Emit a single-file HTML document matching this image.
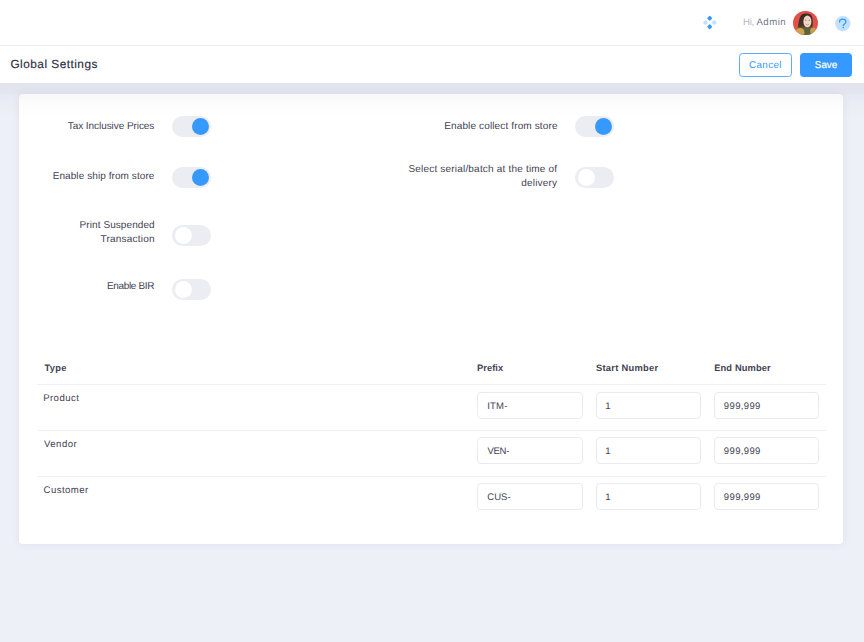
<!DOCTYPE html>
<html><head><meta charset="utf-8">
<style>
*{margin:0;padding:0;box-sizing:border-box}
html,body{width:864px;height:642px;overflow:hidden;background:#eef0f8;font-family:"Liberation Sans",sans-serif}
.abs{position:absolute}
#hdr{position:absolute;left:0;top:0;width:864px;height:46px;background:#fff;border-bottom:1px solid #ecedf3}
#sub{position:absolute;left:0;top:46px;width:864px;height:37px;background:#fff}
#shade{position:absolute;left:0;top:83px;width:864px;height:34px;z-index:5;background:linear-gradient(rgba(67,70,110,.075) 0px,rgba(67,70,110,.07) 6px,rgba(67,70,110,.06) 10.5px,rgba(67,70,110,.045) 11px,rgba(67,70,110,.025) 17px,rgba(67,70,110,.01) 25px,rgba(67,70,110,0) 34px)}
#card{position:absolute;left:19px;top:94px;width:824px;height:450px;background:#fff;border-radius:4px;box-shadow:0 0 8px rgba(67,70,110,.09)}
.tg{position:absolute;width:39.5px;height:21px;border-radius:11px;background:#ebedf3}
.tg .k{position:absolute;width:17px;height:17px;border-radius:50%;top:2px}
.tg.on .k{left:20.8px;background:#3699ff;box-shadow:0 0 0 0.6px rgba(255,240,225,.5)}
.tg.off .k{left:3px;background:#fff}
.hline{position:absolute;left:37px;width:789px;height:1px;background:#f0f1f6}
.inp{position:absolute;height:27px;border:1px solid #eaebf2;border-radius:4px;background:#fff}
svg{position:absolute;left:0;top:0}
text{font-family:"Liberation Sans",sans-serif;text-rendering:geometricPrecision}
</style></head><body>
<div id="hdr"></div>
<div id="sub"></div>
<div id="shade"></div>

<svg width="864" height="46" viewBox="0 0 864 46">
  <rect x="707.7" y="16.3" width="4" height="4" rx="1.1" fill="#3699ff" transform="rotate(45 709.7 18.3)"/>
  <rect x="707.7" y="24.7" width="4" height="4" rx="1.1" fill="#3699ff" transform="rotate(45 709.7 26.7)"/>
  <rect x="703.5" y="20.5" width="4" height="4" rx="1.1" fill="#c3e0ff" transform="rotate(45 705.5 22.5)"/>
  <rect x="712.2" y="20.5" width="4" height="4" rx="1.1" fill="#c3e0ff" transform="rotate(45 714.2 22.5)"/>
  <circle cx="842.8" cy="23.6" r="7.7" fill="#c3e0ff"/>
  <path d="M839.5 22 C839.5 20.2 840.8 19.1 842.7 19.1 C844.6 19.1 845.9 20.3 845.9 21.9 C845.9 23.8 843.4 24 843.2 25.7" fill="none" stroke="#3699ff" stroke-width="1.3" stroke-linecap="round"/>
  <circle cx="843.2" cy="27.6" r="0.8" fill="#3699ff"/>
</svg>
<div class="abs" style="left:793px;top:10.5px;width:24.8px;height:24.6px;border-radius:50%;overflow:hidden">
  <svg width="25" height="25" viewBox="0 0 25 25">
    <defs><linearGradient id="hg" x1="0" y1="0" x2="0" y2="1"><stop offset="0" stop-color="#3a2a22"/><stop offset="0.55" stop-color="#4a3526"/><stop offset="0.8" stop-color="#b58a48"/><stop offset="1" stop-color="#d3a855"/></linearGradient></defs>
    <rect width="25" height="25" fill="#e2504a"/>
    <path d="M4 24 C5 16 5.5 6 9 3.6 C11 2.2 15 2 17.5 3.5 C20 5 20 10 19.6 17 L21 22 L12 25 Z" fill="url(#hg)"/>
    <ellipse cx="14.4" cy="10.6" rx="4" ry="6" fill="#f0d6c8"/>
    <path d="M12.2 9.2 h1.2 M15.6 9.2 h1.2" stroke="#6b4a3a" stroke-width="0.8"/>
    <path d="M12.8 13.2 Q14.4 14.6 16 13.2" stroke="#c98a7a" stroke-width="0.8" fill="none"/>
    <path d="M9 25 L9.8 17.5 C11 16 17 16 18.5 17.5 L19.2 25 Z" fill="#5b6240"/>
    <ellipse cx="7" cy="21.5" rx="4.5" ry="4.5" fill="#cfa24f"/>
    <ellipse cx="20.2" cy="20.2" rx="3" ry="3.6" fill="#c99c4c"/>
  </svg>
</div>

<div class="abs" style="left:739px;top:53px;width:52.5px;height:24px;border:1px solid #5eaaff;border-radius:3.5px;background:#fff"></div>
<div class="abs" style="left:800px;top:53px;width:52px;height:24px;border-radius:4px;background:#3699ff"></div>

<div id="card"></div>

<div class="tg on" style="left:171.5px;top:116px"><div class="k"></div></div>
<div class="tg on" style="left:171.5px;top:166.5px"><div class="k"></div></div>
<div class="tg off" style="left:171.5px;top:225px"><div class="k"></div></div>
<div class="tg off" style="left:171.5px;top:279px"><div class="k"></div></div>
<div class="tg on" style="left:574.5px;top:116px"><div class="k"></div></div>
<div class="tg off" style="left:574.5px;top:166.5px"><div class="k"></div></div>

<div class="hline" style="top:384px"></div>
<div class="hline" style="top:430px"></div>
<div class="hline" style="top:476px"></div>

<div class="inp" style="left:477px;top:392px;width:106px"></div>
<div class="inp" style="left:596px;top:392px;width:105px"></div>
<div class="inp" style="left:714px;top:392px;width:105px"></div>
<div class="inp" style="left:477px;top:437.3px;width:106px"></div>
<div class="inp" style="left:596px;top:437.3px;width:105px"></div>
<div class="inp" style="left:714px;top:437.3px;width:105px"></div>
<div class="inp" style="left:477px;top:483px;width:106px"></div>
<div class="inp" style="left:596px;top:483px;width:105px"></div>
<div class="inp" style="left:714px;top:483px;width:105px"></div>

<svg width="864" height="642" viewBox="0 0 864 642">
<text x="10.41" y="67.60" font-size="11.8" font-weight="normal" fill="#2b2d42" letter-spacing="0.498" stroke="#2b2d42" stroke-width="0.15">Global Settings</text>
<text x="749.11" y="67.70" font-size="9.9" font-weight="normal" fill="#3699ff" letter-spacing="0.319">Cancel</text>
<text x="814.85" y="67.60" font-size="9.9" font-weight="normal" fill="#ffffff" letter-spacing="-0.037" stroke="#ffffff" stroke-width="0.2">Save</text>
<text x="743.03" y="24.60" font-size="9.6" font-weight="normal" fill="#b5b5c3" letter-spacing="-0.311">Hi,</text>
<text x="756.40" y="24.60" font-size="9.6" font-weight="normal" fill="#74768e" letter-spacing="0.519">Admin</text>
<text x="67.80" y="128.70" font-size="10.0" font-weight="normal" fill="#3f4254" letter-spacing="-0.066">Tax Inclusive Prices</text>
<text x="52.70" y="178.70" font-size="10.0" font-weight="normal" fill="#3f4254" letter-spacing="0.079">Enable ship from store</text>
<text x="79.60" y="228.40" font-size="10.0" font-weight="normal" fill="#3f4254" letter-spacing="0.077">Print Suspended</text>
<text x="100.50" y="241.70" font-size="10.0" font-weight="normal" fill="#3f4254" letter-spacing="0.224">Transaction</text>
<text x="107.00" y="288.90" font-size="10.0" font-weight="normal" fill="#3f4254" letter-spacing="-0.352">Enable BIR</text>
<text x="444.20" y="128.60" font-size="10.0" font-weight="normal" fill="#3f4254" letter-spacing="0.136">Enable collect from store</text>
<text x="408.45" y="172.00" font-size="10.0" font-weight="normal" fill="#3f4254" letter-spacing="0.192">Select serial/batch at the time of</text>
<text x="521.30" y="185.80" font-size="10.0" font-weight="normal" fill="#3f4254" letter-spacing="0.177">delivery</text>
<text x="44.41" y="370.70" font-size="9.3" font-weight="bold" fill="#3f4254" letter-spacing="0.322">Type</text>
<text x="477.00" y="370.90" font-size="9.3" font-weight="bold" fill="#3f4254" letter-spacing="0.063">Prefix</text>
<text x="595.97" y="370.70" font-size="9.3" font-weight="bold" fill="#3f4254" letter-spacing="0.296">Start Number</text>
<text x="714.20" y="370.70" font-size="9.3" font-weight="bold" fill="#3f4254" letter-spacing="0.139">End Number</text>
<text x="43.13" y="400.60" font-size="9.6" font-weight="normal" fill="#3f4254" letter-spacing="0.452">Product</text>
<text x="44.00" y="446.70" font-size="9.6" font-weight="normal" fill="#3f4254" letter-spacing="0.460">Vendor</text>
<text x="43.52" y="492.50" font-size="9.6" font-weight="normal" fill="#3f4254" letter-spacing="0.456">Customer</text>
<text x="487.14" y="408.60" font-size="9.5" font-weight="normal" fill="#3f4254" letter-spacing="0.248">ITM-</text>
<text x="487.40" y="454.30" font-size="9.5" font-weight="normal" fill="#3f4254" letter-spacing="-0.263">VEN-</text>
<text x="487.32" y="499.90" font-size="9.5" font-weight="normal" fill="#3f4254" letter-spacing="0.021">CUS-</text>
<text x="605.29" y="408.60" font-size="9.5" font-weight="normal" fill="#3f4254" letter-spacing="0.300">1</text>
<text x="605.29" y="454.20" font-size="9.5" font-weight="normal" fill="#3f4254" letter-spacing="0.300">1</text>
<text x="605.29" y="499.90" font-size="9.5" font-weight="normal" fill="#3f4254" letter-spacing="0.300">1</text>
<text x="723.87" y="408.60" font-size="9.5" font-weight="normal" fill="#3f4254" letter-spacing="0.354">999,999</text>
<text x="723.87" y="454.20" font-size="9.5" font-weight="normal" fill="#3f4254" letter-spacing="0.354">999,999</text>
<text x="723.87" y="499.90" font-size="9.5" font-weight="normal" fill="#3f4254" letter-spacing="0.354">999,999</text>
</svg>
</body></html>
